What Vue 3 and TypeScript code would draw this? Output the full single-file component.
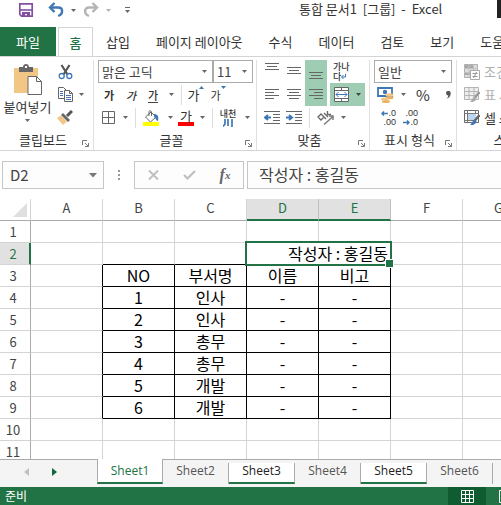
<script setup lang="ts">
import { ref } from 'vue'

interface Cell {
  key: string
  text: string
  span: number
  classes: string[]
}

const menuTabs: string[] = ['삽입', '페이지 레이아웃', '수식', '데이터', '검토', '보기', '도움말']
const columns: string[] = ['A', 'B', 'C', 'D', 'E', 'F', 'G', 'H']
const rowCount = 12
const tableTop = 3
const tableRows: string[][] = [
  ['NO', '부서명', '이름', '비고'],
  ['1', '인사', '-', '-'],
  ['2', '인사', '-', '-'],
  ['3', '총무', '-', '-'],
  ['4', '총무', '-', '-'],
  ['5', '개발', '-', '-'],
  ['6', '개발', '-', '-'],
]

const author = ref('작성자 : 홍길동')
const nameBox = ref('D2')
const activeSheet = ref('Sheet1')
const sheets = ['Sheet1', 'Sheet2', 'Sheet3', 'Sheet4', 'Sheet5', 'Sheet6']
const grouped = ['Sheet1', 'Sheet3', 'Sheet5']

function inTable(row: number, col: number): boolean {
  return row >= tableTop && row < tableTop + tableRows.length && col >= 1 && col <= 4
}

function cellsOf(row: number): Cell[] {
  const cells: Cell[] = []
  for (let col = 0; col < columns.length; col++) {
    const merged = row === 2 && col === 3
    const filled = inTable(row, col)
    const classes: string[] = []
    if (filled || inTable(row, col + 1)) classes.push('line-right')
    if (filled || inTable(row + 1, col)) classes.push('line-bottom')
    if (merged) classes.push('selected')
    cells.push({
      key: columns[col] + row,
      text: merged ? author.value : filled ? tableRows[row - tableTop][col - 1] : '',
      span: merged ? 2 : 1,
      classes,
    })
    if (merged) col++
  }
  return cells
}
</script>

<template>
  <div class="app">
    <header class="titlebar">
      <div class="quick">
        <button aria-label="저장" class="q-save">
          <svg width="16" height="16" viewBox="0 0 16 16"><path d="M1.800 1.800h12.400v12.400H3.500l-1.700-1.700z" fill="#fff" stroke="#8250a0" stroke-width="1.700" /><path d="M2 8h12" stroke="#8250a0" stroke-width="1.600" /><path d="M4 10h8v5H9v-3H7v3H4z" fill="#8250a0" /></svg>
        </button>
        <button aria-label="실행 취소" class="q-undo">
          <svg width="16" height="16" viewBox="0 0 16 16"><path d="M2 5.500h8.200c5.200 0 5.200 6.500 0 8.500" fill="none" stroke="#3f76b5" stroke-width="2.400" /><path d="M6.500 1L2 5.500 6.500 10" fill="none" stroke="#3f76b5" stroke-width="2.400" /></svg>
        </button>
        <button aria-label="실행 취소 목록" class="q-arrow"><svg width="5" height="3"><path d="M0 0h5L2.500 3z" fill="#666" /></svg></button>
        <button aria-label="다시 실행" class="q-redo">
          <svg width="16" height="16" viewBox="0 0 16 16"><path d="M14 5.500H6C.8 5.500.8 12 6 14" fill="none" stroke="#b4b4b4" stroke-width="2.400" /><path d="M9.500 1L14 5.500 9.500 10" fill="none" stroke="#b4b4b4" stroke-width="2.400" /></svg>
        </button>
        <button aria-label="다시 실행 목록" class="q-arrow"><svg width="5" height="3"><path d="M0 0h5L2.500 3z" fill="#b4b4b4" /></svg></button>
        <button aria-label="빠른 실행 도구 모음 사용자 지정" class="q-more"><svg width="5" height="7"><path d="M0 .5h5" stroke="#666" /><path d="M0 3h5L2.500 6z" fill="#666" /></svg></button>
      </div>
      <h1 class="title">통합 문서1 &nbsp;[그룹] &nbsp;- &nbsp;Excel</h1>
      <span class="window-edge"></span>
    </header>

    <nav class="menu">
      <button class="file">파일</button>
      <button class="home">홈</button>
      <button v-for="tab in menuTabs" :key="tab" class="menu-tab">{{ tab }}</button>
    </nav>

    <section class="ribbon">
      <div class="group clipboard">
        <div class="body clip-body">
          <button class="paste">
            <svg width="30" height="31" viewBox="0 0 30 31"><path d="M1 4h24v25H1z" fill="#f2c684" /><path d="M6 3h4c0-4 6-4 6 0h4v5H6z" fill="#666" /><path d="M12 2h2v2h-2z" fill="#fff" /><path d="M15 12.500h8.500l5 5v13H15z" fill="#fff" stroke="#666" /><path d="M23.500 12.500v5h5" fill="none" stroke="#666" /></svg>
            <span>붙여넣기</span>
            <svg width="5" height="3"><path d="M0 0h5L2.500 3z" fill="#666" /></svg>
          </button>
          <div class="clip-tools">
            <button aria-label="잘라내기"><svg width="15" height="16" viewBox="0 0 15 16"><path d="M3.500 1l6 9.500M11.500 1l-6 9.500" stroke="#555" stroke-width="2.200" /><circle cx="3.700" cy="12" r="2.500" fill="#fff" stroke="#3f76b5" stroke-width="1.300" /><circle cx="11.300" cy="12" r="2.500" fill="#fff" stroke="#3f76b5" stroke-width="1.300" /></svg></button>
            <div class="pair">
              <button aria-label="복사"><svg width="15" height="15" viewBox="0 0 15 15"><path d="M.5.500h5l3 3v8h-8z" fill="#fff" stroke="#666" /><path d="M2 4.500h3M2 6.500h3M2 8.500h3" stroke="#3f76b5" /><path d="M6.500 3.500h5l3 3v8h-8z" fill="#fff" stroke="#666" /><path d="M11.500 3.500v3h3" fill="none" stroke="#666" /><path d="M8 8.500h5M8 10.500h5M8 12.500h5" stroke="#3f76b5" /></svg></button>
              <button aria-label="복사 옵션" class="drop"><svg width="5" height="3"><path d="M0 0h5L2.500 3z" fill="#666" /></svg></button>
            </div>
            <button aria-label="서식 복사"><svg width="16" height="15" viewBox="0 0 16 15"><path d="M15 1l-5 5" stroke="#555" stroke-width="3" /><path d="M6 3l7 7-2 2-7-7z" fill="#666" /><path d="M4 5.500l6 6-4 3.500L0 8z" fill="#f2c684" /></svg></button>
          </div>
        </div>
        <div class="caption"><span>클립보드</span><button aria-label="클립보드 설정"><svg class="launcher" width="7" height="7" viewBox="0 0 7 7"><path d="M.5 5V.5H5M3 3l3 3M6.500 3v3.500H3" fill="none" stroke="#777" /></svg></button></div>
      </div>

      <div class="group font">
        <div class="body">
          <div class="row">
            <div class="combo family"><select aria-label="글꼴"><option>맑은 고딕</option></select><svg width="5" height="3"><path d="M0 0h5L2.500 3z" fill="#666" /></svg></div>
            <div class="combo size"><select aria-label="글꼴 크기"><option>11</option></select><svg width="5" height="3"><path d="M0 0h5L2.500 3z" fill="#666" /></svg></div>
          </div>
          <div class="row">
            <button class="tool ga bold">가</button>
            <button class="tool ga italic">가</button>
            <button class="tool ga under"><span>가</span></button>
            <button aria-label="밑줄 옵션" class="drop"><svg width="5" height="3"><path d="M0 0h5L2.500 3z" fill="#666" /></svg></button>
            <i class="rule"></i>
            <button aria-label="글꼴 크기 크게" class="tool grow"><span>가</span><svg width="5" height="3"><path d="M0 3h5L2.500 0z" fill="#3f76b5" /></svg></button>
            <button aria-label="글꼴 크기 작게" class="tool shrink"><span>가</span><svg width="5" height="3"><path d="M0 0h5L2.500 3z" fill="#3f76b5" /></svg></button>
          </div>
          <div class="row paint">
            <button aria-label="테두리" class="tool border-tool"><svg width="13" height="13" viewBox="0 0 13 13"><path d="M.5.500h12v12H.5zM6.500 0v13M0 6.500h13" fill="none" stroke="#666" /></svg></button>
            <button aria-label="테두리 옵션" class="drop"><svg width="5" height="3"><path d="M0 0h5L2.500 3z" fill="#666" /></svg></button>
            <i class="rule"></i>
            <button aria-label="채우기 색" class="tool fill"><svg width="16" height="16" viewBox="0 0 16 16"><path d="M2.500 7L8 2l5 5-5.500 5z" fill="#fff" stroke="#666" /><path d="M6 6V1.500C6 .5 8.500.500 8.500 2v4" fill="none" stroke="#666" /><path d="M11 4c4 0 5 3 4 7-2 0-2-3-4-4z" fill="#3f76b5" /><path d="M0 12h16v4H0z" fill="#ff0" /></svg></button>
            <button aria-label="채우기 색 옵션" class="drop"><svg width="5" height="3"><path d="M0 0h5L2.500 3z" fill="#666" /></svg></button>
            <button aria-label="글꼴 색" class="tool color"><span>가</span></button>
            <button aria-label="글꼴 색 옵션" class="drop"><svg width="5" height="3"><path d="M0 0h5L2.500 3z" fill="#666" /></svg></button>
            <i class="rule"></i>
            <button aria-label="윗주" class="tool ruby"><span>내천</span><svg width="10" height="8" viewBox="0 0 10 8"><path d="M2 0v5L0 7.500M5 0v7M9 0v8" fill="none" stroke="#3f76b5" stroke-width="1.700" /></svg></button>
            <button aria-label="윗주 옵션" class="drop"><svg width="5" height="3"><path d="M0 0h5L2.500 3z" fill="#666" /></svg></button>
          </div>
        </div>
        <div class="caption"><span>글꼴</span><button aria-label="글꼴 설정"><svg class="launcher" width="7" height="7" viewBox="0 0 7 7"><path d="M.5 5V.5H5M3 3l3 3M6.500 3v3.500H3" fill="none" stroke="#777" /></svg></button></div>
      </div>

      <div class="group align">
        <div class="body">
          <div class="row">
            <button aria-label="위쪽 맞춤" class="tool"><svg width="14" height="17" viewBox="0 0 14 17"><path d="M0 .5h14M2 3.500h10M0 6.500h14" stroke="#666" /></svg></button>
            <button aria-label="가운데 맞춤" class="tool"><svg width="14" height="17" viewBox="0 0 14 17"><path d="M0 4.500h14M2 7.500h10M0 10.500h14" stroke="#666" /></svg></button>
            <button aria-label="아래쪽 맞춤" class="tool on"><svg width="14" height="17" viewBox="0 0 14 17"><path d="M0 15.500h14M2 12.500h10M0 9.500h14" stroke="#666" /></svg></button>
            <button aria-label="텍스트 줄 바꿈" class="tool wrap"><span>가나</span><span>다<svg width="5" height="5" viewBox="0 0 5 5"><path d="M4.500 0v3H1M2.500 1L.5 3l2 2" fill="none" stroke="#3f76b5" /></svg></span></button>
          </div>
          <div class="row">
            <button aria-label="왼쪽 맞춤" class="tool"><svg width="14" height="11" viewBox="0 0 14 11"><path d="M0 .5h14M0 3.500h9M0 6.500h14M0 9.500h9" stroke="#666" /></svg></button>
            <button aria-label="가로 가운데 맞춤" class="tool"><svg width="14" height="11" viewBox="0 0 14 11"><path d="M0 .5h14M2 3.500h10M0 6.500h14M2 9.500h10" stroke="#666" /></svg></button>
            <button aria-label="오른쪽 맞춤" class="tool on"><svg width="14" height="11" viewBox="0 0 14 11"><path d="M0 .5h14M5 3.500h9M0 6.500h14M5 9.500h9" stroke="#666" /></svg></button>
            <button aria-label="병합하고 가운데 맞춤" class="tool merge on"><svg width="15" height="15" viewBox="0 0 15 15"><path d="M.5.500h14v14H.5z" fill="#fff" stroke="#666" /><path d="M0 3.500h15M0 11.500h15M7.500 0v3.500M7.500 11.500V15" stroke="#666" /><path d="M2 7.500h11M4.500 5L2 7.500 4.500 10M10.500 5L13 7.500 10.500 10" fill="none" stroke="#3f76b5" /></svg><svg width="5" height="3"><path d="M0 0h5L2.500 3z" fill="#444" /></svg></button>
          </div>
          <div class="row">
            <button aria-label="내어쓰기" class="tool"><svg width="16" height="13" viewBox="0 0 16 13"><path d="M0 .5h16M9 3.500h7M9 6.500h7M9 9.500h7M0 12.500h16" stroke="#666" /><path d="M1 6.500h6M4 4L1 6.500 4 9" fill="none" stroke="#3f76b5" stroke-width="2" /></svg></button>
            <button aria-label="들여쓰기" class="tool"><svg width="16" height="13" viewBox="0 0 16 13"><path d="M0 .5h16M9 3.500h7M9 6.500h7M9 9.500h7M0 12.500h16" stroke="#666" /><path d="M0 6.500h6M3 4l3 2.500L3 9" fill="none" stroke="#3f76b5" stroke-width="2" /></svg></button>
            <i class="rule"></i>
            <button aria-label="방향" class="tool"><svg width="17" height="16" viewBox="0 0 17 16"><path d="M1 7l3-3 3 3-3 3zM5.500 5.500L9 9M7 3l4 4M10.500 1v3.500H14" fill="none" stroke="#666" stroke-width="1.300" /><path d="M7 14.500l9-8M12 6h4v4" fill="none" stroke="#777" stroke-width="1.400" /></svg></button>
            <button aria-label="방향 옵션" class="drop"><svg width="5" height="3"><path d="M0 0h5L2.500 3z" fill="#666" /></svg></button>
          </div>
        </div>
        <div class="caption"><span>맞춤</span><button aria-label="맞춤 설정"><svg class="launcher" width="7" height="7" viewBox="0 0 7 7"><path d="M.5 5V.5H5M3 3l3 3M6.500 3v3.500H3" fill="none" stroke="#777" /></svg></button></div>
      </div>

      <div class="group number">
        <div class="body">
          <div class="row">
            <div class="combo format"><select aria-label="표시 형식"><option>일반</option></select><svg width="5" height="3"><path d="M0 0h5L2.500 3z" fill="#666" /></svg></div>
          </div>
          <div class="row">
            <button aria-label="회계 표시 형식" class="tool"><svg width="17" height="16" viewBox="0 0 17 16"><path d="M1 1h14v8H1z" fill="#fff" stroke="#3f76b5" stroke-width="1.800" /><circle cx="8" cy="5" r="2.200" fill="#3f76b5" /><ellipse cx="12.500" cy="8" rx="4" ry="1.800" fill="#f2c684" /><ellipse cx="12.500" cy="10.800" rx="4" ry="1.500" fill="#e8b264" /><ellipse cx="8" cy="12" rx="4" ry="1.600" fill="#f2c684" /><ellipse cx="9" cy="14.400" rx="4" ry="1.500" fill="#e8b264" /></svg></button>
            <button aria-label="회계 표시 형식 옵션" class="drop"><svg width="5" height="3"><path d="M0 0h5L2.500 3z" fill="#666" /></svg></button>
            <button class="tool percent">%</button>
            <button aria-label="쉼표 스타일" class="tool comma"><svg width="5" height="8" viewBox="0 0 5 8"><path d="M0 2a2.300 2.300 0 1 1 4.700.5C4.500 5.500 3 7 .7 7.500c1-1 1.600-2 1.600-3C1 4.500 0 3.500 0 2z" fill="#555" /></svg></button>
          </div>
          <div class="row">
            <button aria-label="자릿수 늘림" class="tool digits"><span><svg width="7" height="5" viewBox="0 0 7 5"><path d="M1 2.500h6M3 .5l-2 2 2 2" fill="none" stroke="#3f76b5" stroke-width="1.500" /></svg>.0</span><span>.00</span></button>
            <button aria-label="자릿수 줄임" class="tool digits"><span>.00</span><span><svg width="7" height="5" viewBox="0 0 7 5"><path d="M0 2.500h6M4 .5l2 2-2 2" fill="none" stroke="#3f76b5" stroke-width="1.500" /></svg>.0</span></button>
          </div>
        </div>
        <div class="caption"><span>표시 형식</span><button aria-label="표시 형식 설정"><svg class="launcher" width="7" height="7" viewBox="0 0 7 7"><path d="M.5 5V.5H5M3 3l3 3M6.500 3v3.500H3" fill="none" stroke="#777" /></svg></button></div>
      </div>

      <div class="group styles">
        <div class="body">
          <button class="style-tool" disabled><svg width="16" height="16" viewBox="0 0 16 16"><path d="M.5.500h13v13H.5z" fill="#ddd" stroke="#b0b0b0" /><path d="M1 1h8v3H1zM1 8h6v3H1z" fill="#aaa" /><path d="M0 4.500h14M0 8.500h14M5 0v13M9.500 0v13" stroke="#c0c0c0" /><path d="M6.500 6.500h9v9h-9z" fill="#fff" stroke="#aaa" /><path d="M8.500 9.500h5M8.500 12.500h5M12.500 8l-3 6" stroke="#999" /></svg>조건부 서식</button>
          <button class="style-tool" disabled><svg width="16" height="16" viewBox="0 0 16 16"><path d="M.5.500h14v12H.5z" fill="#eee" stroke="#b4b4b4" /><path d="M0 4.500h15M0 8.500h15M5 0v13M10 0v13" stroke="#b4b4b4" /><path d="M15.500 5l-5 6" stroke="#999" stroke-width="2.500" /><path d="M10.500 9.500l2 2c-1 3-4 4-6.500 3.500 2-1.500 2-4 4.500-5.500z" fill="#aaa" /></svg>표 서식</button>
          <button class="style-tool"><svg width="16" height="16" viewBox="0 0 16 16"><path d="M.5.500h14v12H.5z" fill="#fff" stroke="#666" /><path d="M0 3.500h15M3.500 0v13M11.500 0v4M0 10.500h10" stroke="#777" /><path d="M4 4h8v6H4z" fill="#bcd7ef" /><path d="M15.500 5l-5 6" stroke="#666" stroke-width="2.500" /><path d="M10.500 9.500l2 2c-1 3-4 4-6.500 3.500 2-1.500 2-4 4.500-5.500z" fill="#3f76b5" /></svg>셀 스타일</button>
        </div>
        <div class="caption"><span>스타일</span></div>
      </div>
    </section>

    <section class="formula-bar">
      <div class="name-box"><input v-model="nameBox" aria-label="이름 상자" /><button aria-label="이름 목록"><svg width="8" height="5"><path d="M0 0h8L4 4.500z" fill="#777" /></svg></button></div>
      <svg class="dots" width="2" height="11"><path d="M0 0h2v2H0zM0 4h2v2H0zM0 8h2v2H0z" fill="#999" /></svg>
      <div class="fx-box">
        <button aria-label="취소"><svg width="11" height="10" viewBox="0 0 11 10"><path d="M1 .5l9 9M10 .5l-9 9" stroke="#c0c0c0" stroke-width="2" /></svg></button>
        <button aria-label="입력"><svg width="13" height="10" viewBox="0 0 13 10"><path d="M1 5l3.500 3.500L12 1" fill="none" stroke="#c0c0c0" stroke-width="2.200" /></svg></button>
        <button aria-label="함수 삽입" class="fx">f<sub>x</sub></button>
      </div>
      <input v-model="author" class="formula" aria-label="수식 입력줄" />
    </section>

    <main class="sheet">
      <table>
        <colgroup><col class="col-head" /><col v-for="c in columns" :key="c" class="col-cell" /></colgroup>
        <thead>
          <tr>
            <th class="corner"><svg width="14" height="14"><path d="M14 0v14H0z" fill="#dfdfdf" /></svg></th>
            <th v-for="c in columns" :key="c" scope="col" :class="{ picked: c === 'D' || c === 'E' }">{{ c }}</th>
          </tr>
        </thead>
        <tbody>
          <tr v-for="r in rowCount" :key="r">
            <th scope="row" :class="{ picked: r === 2 }">{{ r }}</th>
            <td v-for="cell in cellsOf(r)" :key="cell.key" :colspan="cell.span" :class="cell.classes">{{ cell.text }}</td>
          </tr>
        </tbody>
      </table>
    </main>

    <nav class="sheet-tabs">
      <div class="sheet-nav">
        <button aria-label="이전 시트"><svg width="5" height="8"><path d="M5 0v8L0 4z" fill="#c0c0c0" /></svg></button>
        <button aria-label="다음 시트"><svg width="5" height="8"><path d="M0 0v8l5-4z" fill="#0e6b38" /></svg></button>
      </div>
      <button v-for="s in sheets" :key="s" class="sheet-tab" :class="{ grouped: grouped.includes(s), active: s === activeSheet }" @click="activeSheet = s">{{ s }}</button>
    </nav>

    <footer class="status">
      <span>준비</span>
      <div class="views">
        <button aria-label="기본 보기" class="current"><svg width="13" height="13" viewBox="0 0 13 13"><path d="M.5.500h12v12H.5zM4.500 0v13M8.500 0v13M0 4.500h13M0 8.500h13" fill="none" stroke="#fff" /></svg></button>
        <button aria-label="페이지 레이아웃 보기"><svg width="13" height="13" viewBox="0 0 13 13"><path d="M.5.500h12v12H.5zM3.500 3.500h6v9h-6z" fill="none" stroke="#fff" /></svg></button>
      </div>
    </footer>
  </div>
</template>

<style>
body {
  overflow: hidden;
}
</style>

<style scoped>
.app {
  display: flex;
  flex-direction: column;
  height: 100vh;
  overflow: hidden;
  background: #fff;
  color: #333;
  font: 13px/18px 'Noto Sans CJK KR', sans-serif;
}
.app * {
  box-sizing: border-box;
}
button {
  display: flex;
  align-items: center;
  justify-content: center;
  flex: none;
  margin: 0;
  padding: 0;
  border: 0;
  background: none;
  color: inherit;
  font: inherit;
  white-space: nowrap;
}
input,
select {
  min-width: 0;
  margin: 0;
  border: 0;
  outline: 0;
  background: transparent;
  color: #444;
  font: inherit;
  appearance: none;
}
svg {
  display: block;
  flex: none;
}

.titlebar {
  display: flex;
  align-items: flex-start;
  justify-content: space-between;
  flex: none;
  height: 27px;
}
.quick {
  display: flex;
  align-items: center;
  width: 299px;
  height: 20px;
  padding-left: 18px;
}
.q-save { margin-right: 14px; }
.q-arrow { width: 19px; }
.q-more { width: 19px; }
.title {
  flex: 1;
  margin: 0;
  font-size: 13px;
  font-weight: 400;
  line-height: 18px;
  white-space: nowrap;
}
.window-edge {
  width: 4px;
  height: 18px;
  background: #222;
}

.menu {
  display: flex;
  flex: none;
  height: 30px;
  border-bottom: 1px solid #d4d4d4;
  overflow: hidden;
}
.menu button {
  height: 29px;
}
.menu .file {
  width: 56px;
  margin-right: 2px;
  background: #217346;
  color: #fff;
}
.menu .home {
  width: 35px;
  height: 30px;
  border: 1px solid #d4d4d4;
  border-bottom: 0;
  background: #fff;
  color: #217346;
  font-weight: 500;
}
.menu-tab {
  padding: 0 13px;
}

.ribbon {
  display: flex;
  flex: none;
  height: 94px;
  padding: 3px 0 0;
  border-bottom: 1px solid #d4d4d4;
  overflow: hidden;
}
.group {
  display: flex;
  flex: none;
  flex-direction: column;
  height: 90px;
  border-right: 1px solid #e0e0e0;
}
.body {
  flex: none;
  height: 70px;
  padding-left: 4px;
}
.clipboard { width: 94px; }
.font { width: 163px; }
.align { width: 113px; }
.number { width: 87px; }
.styles { width: 110px; }
.row {
  display: flex;
  align-items: center;
  height: 23px;
}
.caption {
  display: flex;
  align-items: center;
  flex: none;
  height: 20px;
  padding: 0 4px;
}
.caption span {
  flex: 1;
  text-align: center;
  white-space: nowrap;
}
.caption button {
  height: 14px;
  align-items: flex-end;
}
.clip-body {
  display: flex;
  gap: 4px;
  padding-left: 3px;
}
.paste {
  flex-direction: column;
  justify-content: flex-start;
  width: 49px;
  padding-top: 4px;
  gap: 3px;
}
.paste span {
  height: 18px;
}
.clip-tools {
  display: flex;
  flex-direction: column;
}
.clip-tools > * {
  align-self: flex-start;
  height: 23px;
}
.clip-tools > button,
.pair > button:first-child {
  width: 18px;
}
.pair {
  display: flex;
  align-items: center;
}
.drop {
  width: 14px;
  height: 23px;
}
.rule {
  width: 1px;
  height: 20px;
  margin: 0 3px;
  background: #dedede;
}
.combo {
  display: grid;
  align-items: center;
  height: 23px;
  border: 1px solid #ababab;
  background: #fff;
}
.combo select,
.combo svg {
  grid-area: 1 / 1;
}
.combo select {
  width: 100%;
  padding: 0 3px;
}
.combo svg {
  justify-self: end;
  margin-right: 5px;
}
.family { width: 115px; }
.size { width: 40px; }
.format { width: 78px; }
.tool {
  width: 22px;
  height: 23px;
}
.ga {
  font-size: 11px;
}
.bold { font-weight: 700; }
.italic { font-style: italic; font-weight: 500; }
.under { font-weight: 500; }
.under span {
  height: 16px;
  line-height: 16px;
  border-bottom: 1px solid #444;
}
.grow { font-size: 13px; }
.shrink { font-size: 11px; }
.grow svg,
.shrink svg {
  align-self: flex-start;
  margin-top: 3px;
}
.color span {
  width: 16px;
  height: 17px;
  line-height: 13px;
  border-bottom: 4px solid #f00;
}
.ruby {
  flex-direction: column;
  font-size: 9px;
  font-weight: 500;
  line-height: 10px;
}
.paint .border-tool { width: 20px; }
.paint .fill { width: 24px; }
.paint .color { width: 18px; }
.paint .ruby { width: 24px; }
.on { background: #9fcdb3; }
.align .rule { margin: 0 4px; }
.wrap {
  flex-direction: column;
  align-items: flex-start;
  margin-left: 6px;
  font-size: 9px;
  font-weight: 500;
  line-height: 10px;
}
.wrap span {
  display: flex;
  align-items: center;
}
.merge {
  width: 35px;
  margin-left: 3px;
  gap: 7px;
}
.percent {
  width: 26px;
  font-size: 15px;
}
.comma { width: 24px; }
.digits {
  flex-direction: column;
  align-items: flex-end;
  font: 9px/9px 'Liberation Sans', sans-serif;
}
.digits span {
  display: flex;
  align-items: center;
}
.styles .body { padding-left: 7px; }
.style-tool {
  height: 23px;
  gap: 4px;
}
.style-tool:disabled { color: #b0b0b0; }

.formula-bar {
  display: flex;
  align-items: center;
  flex: none;
  height: 48px;
  padding: 0 0 0 2px;
  font-size: 16px;
}
.name-box,
.fx-box,
.formula {
  height: 28px;
  border: 1px solid #c6c6c6;
  background: #fdfdfd;
}
.name-box {
  display: flex;
  width: 102px;
}
.name-box input {
  flex: 1;
  padding: 0 7px;
  font-size: 15px;
}
.name-box button { width: 20px; }
.dots { margin: 0 14px; }
.fx-box {
  display: flex;
  width: 110px;
  margin-right: 3px;
}
.fx-box button { flex: 1; }
.fx {
  color: #666;
  font: italic 700 16px 'Liberation Serif', serif;
}
.fx sub {
  font-size: 11px;
}
.formula {
  flex: 1;
  padding: 0 11px 2px;
  border-right: 0;
}

.sheet {
  flex: 1;
  min-height: 0;
  overflow: hidden;
}
table {
  width: 607px;
  border-collapse: separate;
  border-spacing: 0;
  table-layout: fixed;
}
.col-head { width: 31px; }
.col-cell { width: 72px; }
th,
td {
  height: 22px;
  padding: 0;
  border-right: 1px solid #d4d4d4;
  border-bottom: 1px solid #d4d4d4;
  line-height: 18px;
  text-align: center;
  white-space: nowrap;
}
td {
  padding-bottom: 2px;
  color: #000;
  font-size: 16px;
}
th {
  color: #444;
  font-size: 13px;
  font-weight: 400;
}
thead th {
  border-bottom-color: #ababab;
  padding-bottom: 3px;
}
tbody th {
  padding-right: 4px;
  border-right-color: #ababab;
}
th.picked {
  background: #e1e1e1;
  color: #217346;
}
thead th.picked {
  padding-bottom: 2px;
  border-right-color: #c0c0c0;
  border-bottom: 2px solid #217346;
}
tbody th.picked {
  padding-right: 3px;
  border-right: 2px solid #217346;
}
.corner svg {
  margin: 3px 3px 0 auto;
}
.line-right { border-right-color: #000; }
.line-bottom { border-bottom-color: #000; }
.selected {
  position: relative;
  padding-right: 2px;
  text-align: right;
}
.selected::before {
  content: '';
  position: absolute;
  inset: -2px;
  border: 2px solid #217346;
}
.selected::after {
  content: '';
  position: absolute;
  right: -4px;
  bottom: -4px;
  width: 7px;
  height: 7px;
  border: 1px solid #fff;
  background: #217346;
}

.sheet-tabs {
  display: flex;
  flex: none;
  height: 28px;
  background: #f4f4f4;
  box-shadow: inset 0 1px #ababab;
  overflow: hidden;
}
.sheet-nav {
  display: flex;
  align-items: center;
  flex: none;
  gap: 23px;
  width: 97px;
  height: 26px;
  padding-left: 24px;
}
.sheet-tab {
  align-items: flex-start;
  width: 66px;
  height: 21px;
  margin-top: 4px;
  border-right: 1px solid #ababab;
  color: #555;
  font: 12px/16px 'Open Sans', 'Noto Sans', sans-serif;
}
.sheet-tab.grouped {
  background: #fff;
  border-bottom: 2px solid #217346;
  color: #222;
}
.sheet-tab.active {
  height: 25px;
  margin-top: 0;
  padding-top: 4px;
  border-left: 1px solid #ababab;
  color: #217346;
}

.status {
  display: flex;
  align-items: center;
  justify-content: space-between;
  flex: none;
  height: 18px;
  padding-left: 5px;
  background: #217346;
  color: #fff;
  font-size: 12px;
  overflow: hidden;
}
.views {
  display: flex;
  width: 53px;
}
.views button {
  width: 38px;
  height: 18px;
}
.views .current {
  background: #0e5c2f;
}
</style>
